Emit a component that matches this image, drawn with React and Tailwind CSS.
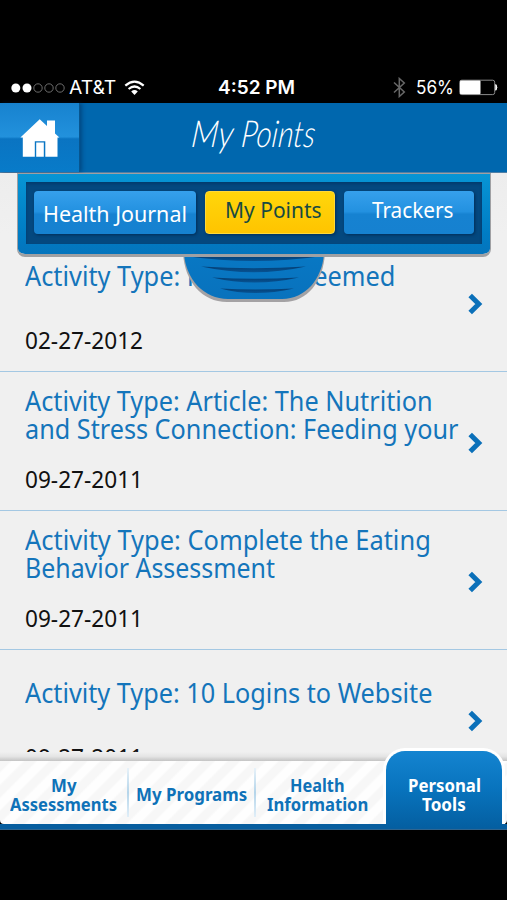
import React, { useLayoutEffect, useRef, useState } from "react";

// Condenses a single line of text horizontally so it fills exactly `width` pixels.
function Fit({ width, children }) {
  const ref = useRef(null);
  const [scale, setScale] = useState(1);
  useLayoutEffect(() => {
    setScale(width / ref.current.offsetWidth);
  }, [width]);
  return (
    <span className="block whitespace-nowrap" style={{ width }}>
      <span ref={ref} className="inline-block origin-left" style={{ transform: `scaleX(${scale})` }}>
        {children}
      </span>
    </span>
  );
}

const activities = [
  { lines: [["Activity Type: Points Redeemed", 370]], date: "02-27-2012" },
  {
    lines: [
      ["Activity Type: Article: The Nutrition", 408],
      ["and Stress Connection: Feeding your", 433],
    ],
    date: "09-27-2011",
  },
  {
    lines: [
      ["Activity Type: Complete the Eating", 406],
      ["Behavior Assessment", 250],
    ],
    date: "09-27-2011",
  },
  { lines: [["Activity Type: 10 Logins to Website", 407]], date: "09-27-2011" },
];

function StatusBar() {
  return (
    <div className="flex h-[103px] items-end bg-black pb-[4px] font-['Inter',sans-serif] text-white">
      <div className="flex h-[23px] w-full items-center">
        <svg className="ml-[10px] block" width="56" height="12" viewBox="0 0 56 12">
          <circle cx="5.8" cy="6" r="4.5" fill="#fff" />
          <circle cx="17" cy="6" r="4.5" fill="#fff" />
          <circle cx="28" cy="6" r="4.2" fill="none" stroke="#777" strokeWidth="0.9" />
          <circle cx="39" cy="6" r="4.2" fill="none" stroke="#777" strokeWidth="0.9" />
          <circle cx="50" cy="6" r="4.2" fill="none" stroke="#777" strokeWidth="0.9" />
        </svg>
        <div className="ml-[3px] text-[18.5px]">
          <Fit width={47}>AT&amp;T</Fit>
        </div>
        <svg className="ml-[8px] block" width="21" height="16" viewBox="0 0 21 16" fill="none" stroke="#fff">
          <path d="M1.3 5.6Q10.5 -2.4 19.7 5.6" strokeWidth="2.2" />
          <path d="M4.6 9Q10.5 4 16.4 9" strokeWidth="2.2" />
          <path d="M7.2 11.5Q10.5 8.7 13.8 11.5L10.5 15Z" fill="#fff" stroke="none" />
        </svg>
        <div className="ml-[73px] text-[18.5px] font-semibold">
          <Fit width={77}>4:52 PM</Fit>
        </div>
        <svg className="ml-[98px] block" width="13" height="21" viewBox="0 0 13 21" fill="none" stroke="#686868" strokeWidth="1.5">
          <path d="M1 5.5L11.3 15L6.3 19.5V1.5L11.3 6L1 15.5" />
        </svg>
        <div className="ml-[10px] text-[18.5px]">
          <Fit width={38}>56%</Fit>
        </div>
        <svg className="ml-[5px] block" width="40" height="17" viewBox="0 0 40 17">
          <rect x="0.7" y="1.2" width="35" height="14.4" rx="2" fill="none" stroke="#8a8a8a" strokeWidth="1" />
          <rect x="1" y="1.5" width="20.5" height="13.8" rx="1" fill="#fff" />
          <path d="M36.8 5.5Q39 8.4 36.8 11.3Z" fill="#fff" stroke="#fff" />
        </svg>
      </div>
    </div>
  );
}

function Header() {
  return (
    <div className="flex h-[70px] border-b border-[#4f7fa6] bg-[#0067ae]">
      <div className="flex w-[80px] items-center justify-center border-r border-[#07558f] bg-[linear-gradient(180deg,#1782cf_0%,#2291dc_49%,#0a74c2_52%,#087bc9_100%)] shadow-[2px_0_4px_rgba(0,35,80,0.45)]">
        <svg className="block" width="40" height="40" viewBox="0 0 40 40">
          <path
            fill="#fff"
            d="M0.4 19.5L19.7 1.3L27 8V2.4H35V15.5L39.4 19.5H37.5V38.7H25.3V23.3H14.8V38.7H2.8V19.5ZM16.2 24.5H23.8V38.7H16.2Z"
          />
        </svg>
      </div>
      <div className="ml-[111px] mt-[7px] flex -skew-x-6 gap-[8px] font-['Lato',sans-serif] text-[37px] font-light italic leading-[46px] text-white">
        <Fit width={42}>My</Fit>
        <Fit width={74}>Points</Fit>
      </div>
    </div>
  );
}

function SwitcherPanel() {
  return (
    <div className="absolute left-[17px] top-0">
      {/* The drawer sits behind the bottom edge of the panel. */}
      <svg className="absolute left-[164px] top-[79px] block" width="148" height="52" viewBox="0 0 148 52">
        <defs>
          <linearGradient id="drawer" x1="0" y1="0" x2="0" y2="1">
            <stop offset="0" stopColor="#0878c4" />
            <stop offset="1" stopColor="#0872bd" />
          </linearGradient>
          <linearGradient id="groove" x1="0" y1="0" x2="0" y2="1">
            <stop offset="0" stopColor="#043e74" />
            <stop offset="1" stopColor="#075393" />
          </linearGradient>
        </defs>
        <path d="M2 0C3 28 20 50 46 50H103C127 50 143 28 144 0Z" fill="#a4a2a4" />
        <path d="M3 0C4 26 22 47 47 47H101C125 47 142 26 143 0Z" fill="url(#drawer)" />
        <g fill="url(#groove)">
          <path d="M4 4H142Q73 14 4 4Z" />
          <path d="M20 14.5Q73 18 125 14.5Q73 26 20 14.5Z" />
          <path d="M31 25.5Q73 28 118 25.5Q73 35.5 31 25.5Z" />
          <path d="M39 36.5Q73 38.5 113 36.5Q73 45.5 39 36.5Z" />
        </g>
      </svg>
      <div className="relative h-[84px] w-[474px] rounded-b-[8px] border-x border-b-[3px] border-t border-[#9fa0a3] bg-[linear-gradient(180deg,#0795d5_0%,#007cc4_75%,#0474bd_100%)] bg-clip-padding px-[8px] pt-[8px]">
        <div className="flex h-[62px] w-[456px] gap-[9px] bg-[#04487f] px-[8px] pt-[9px] font-['Noto_Sans','Open_Sans',sans-serif] text-[22.5px] shadow-[inset_0_2px_3px_#033b6c]">
          <div className="flex h-[43px] w-[162px] justify-center rounded-[4px] bg-[linear-gradient(180deg,#36a0ec_0%,#2391e0_48%,#1682d1_54%,#1681d0_100%)] pt-[8px] leading-[30px] text-white shadow-[1px_1px_3px_#022d57]">
            <Fit width={144}>Health Journal</Fit>
          </div>
          <div className="flex h-[43px] w-[130px] rounded-[4px] border border-[#ffd83a] bg-[linear-gradient(180deg,#ffd60b_0%,#ffc400_100%)] pl-[19px] pt-[3px] leading-[30px] text-[#174a42] shadow-[1px_1px_3px_#022d57]">
            <Fit width={97}>My Points</Fit>
          </div>
          <div className="flex h-[43px] w-[130px] rounded-[4px] bg-[linear-gradient(180deg,#36a0ec_0%,#2391e0_48%,#1682d1_54%,#1681d0_100%)] pl-[28px] pt-[4px] leading-[30px] text-white shadow-[1px_1px_3px_#022d57]">
            <Fit width={81}>Trackers</Fit>
          </div>
        </div>
      </div>
    </div>
  );
}

function ActivityRow({ item }) {
  return (
    <div className="flex h-[139px] shrink-0 items-center justify-between border-b border-[#a4c8e3] pl-[25px] pr-[24px]">
      <div className="h-full">
        <div className="flex h-[86px] flex-col justify-center text-[26.5px] leading-[28px] text-[#1475bb]">
          {item.lines.map(([text, width]) => (
            <Fit key={text} width={width}>
              {text}
            </Fit>
          ))}
        </div>
        <div className="mt-[6px] text-[23px] leading-[30px] text-[#111]">
          <Fit width={118}>{item.date}</Fit>
        </div>
      </div>
      <svg className="mt-[3px] block" width="15" height="22" viewBox="0 0 15 22" fill="none" stroke="#0b70b9" strokeWidth="5">
        <path d="M2.2 2.4L10.8 11L2.2 19.6" />
      </svg>
    </div>
  );
}

function Divider() {
  return <div className="h-[49px] w-[2px] bg-[linear-gradient(180deg,#e8f2f9,#b5d5ea_50%,#e0eef8)]" />;
}

function BottomNav() {
  return (
    <div className="relative h-[69px] border-b border-[#30658f] font-['Noto_Sans','Open_Sans',sans-serif] text-[17.5px] font-bold leading-[19px] text-[#0f72b8]">
      <div className="flex h-[63px] items-center rounded-b-[4px] bg-[#fdfdfd] bg-[repeating-linear-gradient(135deg,#f7f7f7_0px,#f7f7f7_7px,#fefefe_9px,#fefefe_16px,#f7f7f7_18px)]">
        <div className="flex w-[127px] flex-col items-center pt-[4px]">
          <Fit width={26}>My</Fit>
          <Fit width={107}>Assessments</Fit>
        </div>
        <Divider />
        <div className="flex w-[125px] justify-center pt-[4px]">
          <Fit width={111}>My Programs</Fit>
        </div>
        <Divider />
        <div className="flex w-[123px] flex-col items-center pt-[4px]">
          <Fit width={55}>Health</Fit>
          <Fit width={101}>Information</Fit>
        </div>
      </div>
      <div className="h-[5px] bg-[#075e9f]" />
      <div className="absolute -top-[13px] left-[383px] h-[76px] w-[122px] rounded-t-[22px] bg-white" />
      <div className="absolute -top-[10px] left-[386px] flex h-[77px] w-[116px] flex-col items-center rounded-t-[19px] bg-[linear-gradient(180deg,#1484d0_0%,#0873bd_50%,#045fa1_100%)] pt-[25px] text-white">
        <Fit width={73}>Personal</Fit>
        <Fit width={44}>Tools</Fit>
      </div>
    </div>
  );
}

export default function App() {
  return (
    <div className="flex h-[900px] w-[507px] flex-col overflow-hidden bg-black font-['Noto_Sans','Open_Sans',sans-serif]">
      <StatusBar />
      <Header />
      <div className="relative h-[588px] overflow-hidden bg-[#f0f0f0] bg-[linear-gradient(180deg,#ededed,#f0f0f0_60px)]">
        <div className="flex h-[579px] flex-col overflow-hidden pt-[60px]">
          {activities.map((item, i) => (
            <ActivityRow key={i} item={item} />
          ))}
        </div>
        <div className="h-[9px] bg-[linear-gradient(180deg,#f0f0f0,#e4e4e4_50%,#c4c4c4)]" />
        <SwitcherPanel />
      </div>
      <BottomNav />
    </div>
  );
}
